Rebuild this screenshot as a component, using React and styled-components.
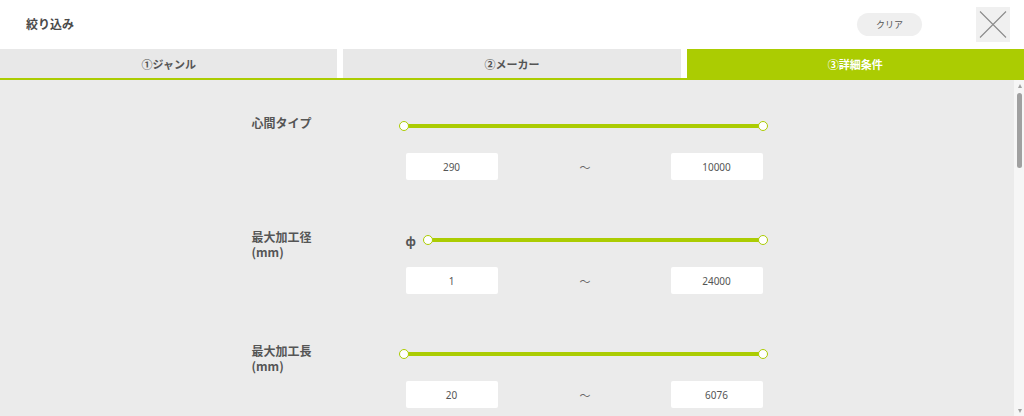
import React from "react";
import styled, { createGlobalStyle } from "styled-components";

const GREEN = "#abcc02";

const Global = createGlobalStyle`
  html, body {
    margin: 0;
    padding: 0;
    height: 100%;
    overflow: hidden;
  }
  body {
    font-family: "Noto Sans CJK JP", "Noto Sans", sans-serif;
    color: #555;
    background: #fff;
  }
`;

const Page = styled.div`
  width: 1024px;
  height: 416px;
  display: flex;
  flex-direction: column;
  background: #fff;
`;

const Header = styled.header`
  height: 49px;
  display: flex;
  align-items: center;
  padding: 0 14px 0 26px;
  box-sizing: border-box;
`;

const Title = styled.h1`
  flex: 1;
  margin: 0;
  font-size: 12px;
  font-weight: 700;
  color: #4a4a4a;
  padding-bottom: 2px;
`;

const ClearButton = styled.button`
  width: 65px;
  height: 23px;
  border: none;
  border-radius: 12px;
  background: #efefef;
  color: #555;
  font-family: inherit;
  font-size: 9px;
  margin-right: 54px;
  margin-top: -1px;
  cursor: pointer;
`;

const CloseButton = styled.button`
  width: 34px;
  height: 35px;
  padding: 0;
  border: none;
  background: #f0f0f0;
  display: flex;
  align-items: center;
  justify-content: center;
  cursor: pointer;
`;

const Tabs = styled.nav`
  display: flex;
  gap: 6px;
  height: 29px;
  border-bottom: 2px solid ${GREEN};
`;

const Tab = styled.div`
  flex: 1;
  display: flex;
  align-items: center;
  justify-content: center;
  font-size: 11px;
  font-weight: 700;
  background: ${(p) => (p.$active ? GREEN : "#e8e8e8")};
  color: ${(p) => (p.$active ? "#fff" : "#555")};
`;

const Body = styled.div`
  flex: 1;
  min-height: 0;
  display: flex;
  background: #ebebeb;
`;

const ScrollArea = styled.div`
  flex: 1;
  overflow: hidden;
`;

const ScrollBar = styled.div`
  width: 10px;
  background: #f6f6f6;
  display: flex;
  flex-direction: column;
  align-items: center;
  padding: 4px 0 3px 1px;
  box-sizing: border-box;
`;

const Arrow = styled.span`
  width: 0;
  height: 0;
  border-left: 2.5px solid transparent;
  border-right: 2.5px solid transparent;
  ${(p) =>
    p.$down
      ? "border-top: 4px solid #a0a0a0; margin-top: auto;"
      : "border-bottom: 4px solid #a0a0a0;"}
`;

const Thumb = styled.div`
  width: 5px;
  height: 75px;
  margin-top: 5px;
  border-radius: 3px;
  background: #a0a0a0;
`;

const Inner = styled.div`
  width: 511px;
  margin: 0 auto;
  padding: 35px 0 0;
`;

const Row = styled.section`
  display: grid;
  grid-template-columns: 153px 358px;
  margin-bottom: 49px;
`;

const Label = styled.div`
  font-size: 12px;
  font-weight: 700;
  line-height: 15px;
  white-space: pre-line;
  color: #555;
`;

const Controls = styled.div`
  display: flex;
  flex-direction: column;
  gap: 16px;
`;

const SliderLine = styled.div`
  height: 22px;
  display: flex;
  align-items: center;
`;

const Prefix = styled.span`
  width: 23px;
  font-size: 12px;
  font-weight: 700;
  color: #555;
  padding-left: 1px;
`;

const Track = styled.div`
  position: relative;
  flex: 1;
  height: 4px;
  background: ${GREEN};
`;

const Handle = styled.span`
  position: absolute;
  top: 50%;
  width: 8px;
  height: 8px;
  margin-top: -5.5px;
  border-radius: 50%;
  background: #fff;
  border: 1.5px solid ${GREEN};
  ${(p) => (p.$end ? "right: -5.5px;" : "left: -5.5px;")}
`;

const Inputs = styled.div`
  display: flex;
  align-items: center;
  justify-content: space-between;
  padding-left: 1px;
`;

const NumBox = styled.div`
  width: 92px;
  height: 27px;
  box-sizing: border-box;
  background: #fff;
  border-radius: 2px;
  display: flex;
  align-items: center;
  justify-content: center;
  font-family: "Noto Sans", sans-serif;
  font-size: 10px;
  color: #555;
`;

const Tilde = styled.span`
  font-size: 11px;
  color: #666;
  margin-left: 2px;
`;

const rows = [
  { label: "心間タイプ", min: "290", max: "10000" },
  { label: "最大加工径\n(mm)", min: "1", max: "24000", prefix: "ф" },
  { label: "最大加工長\n(mm)", min: "20", max: "6076" },
];

const tabs = ["①ジャンル", "②メーカー", "③詳細条件"];

const App = () => {
  return (
    <Page>
      <Global />
      <Header>
        <Title>絞り込み</Title>
        <ClearButton>クリア</ClearButton>
        <CloseButton aria-label="close">
          <svg width="34" height="35" viewBox="0 0 34 35">
            <path d="M4 4.5L30 30.5M30 4.5L4 30.5" stroke="#8a8a8a" strokeWidth="1.1" />
          </svg>
        </CloseButton>
      </Header>
      <Tabs>
        {tabs.map((t, i) => (
          <Tab key={t} $active={i === 2}>
            {t}
          </Tab>
        ))}
      </Tabs>
      <Body>
        <ScrollArea>
          <Inner>
            {rows.map((r) => (
              <Row key={r.label}>
                <Label>{r.label}</Label>
                <Controls>
                  <SliderLine>
                    {r.prefix && <Prefix>{r.prefix}</Prefix>}
                    <Track>
                      <Handle />
                      <Handle $end />
                    </Track>
                  </SliderLine>
                  <Inputs>
                    <NumBox>{r.min}</NumBox>
                    <Tilde>〜</Tilde>
                    <NumBox>{r.max}</NumBox>
                  </Inputs>
                </Controls>
              </Row>
            ))}
          </Inner>
        </ScrollArea>
        <ScrollBar>
          <Arrow />
          <Thumb />
          <Arrow $down />
        </ScrollBar>
      </Body>
    </Page>
  );
};

export default App;
